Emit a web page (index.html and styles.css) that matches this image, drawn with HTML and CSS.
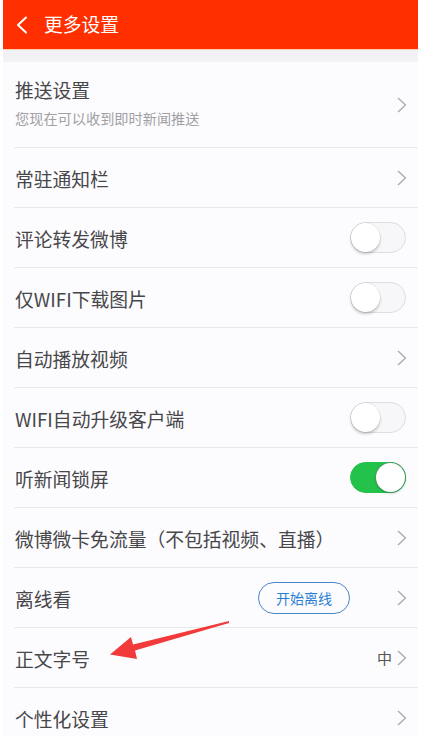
FILE: index.html
```html
<!DOCTYPE html>
<html lang="zh-CN">
<head>
<meta charset="utf-8">
<title>更多设置</title>
<link rel="stylesheet" href="styles.css">
</head>
<body>
<div class="screen">
  <header class="topbar">
    <svg class="back" width="14" height="18" viewBox="0 0 14 18"><path d="M11 1.5 L3 9 L11 16.5" fill="none" stroke="#fff" stroke-width="2" stroke-linecap="round" stroke-linejoin="round"/></svg>
    <span class="title">更多设置</span>
  </header>
  <div class="gap"></div>
  <ul class="list">
    <li class="row tall">
      <div class="label">
        <div class="main">推送设置</div>
        <div class="sub">您现在可以收到即时新闻推送</div>
      </div>
      <svg class="chev" width="10" height="16" viewBox="0 0 10 16"><path d="M1 1 L8.5 8 L1 15" fill="none" stroke="#a9a9ad" stroke-width="1.3"/></svg>
    </li>
    <li class="row">
      <div class="label"><div class="main">常驻通知栏</div></div>
      <svg class="chev" width="10" height="16" viewBox="0 0 10 16"><path d="M1 1 L8.5 8 L1 15" fill="none" stroke="#a9a9ad" stroke-width="1.3"/></svg>
    </li>
    <li class="row">
      <div class="label"><div class="main">评论转发微博</div></div>
      <span class="toggle"><span class="knob"></span></span>
    </li>
    <li class="row">
      <div class="label"><div class="main">仅WIFI下载图片</div></div>
      <span class="toggle"><span class="knob"></span></span>
    </li>
    <li class="row">
      <div class="label"><div class="main">自动播放视频</div></div>
      <svg class="chev" width="10" height="16" viewBox="0 0 10 16"><path d="M1 1 L8.5 8 L1 15" fill="none" stroke="#a9a9ad" stroke-width="1.3"/></svg>
    </li>
    <li class="row">
      <div class="label"><div class="main">WIFI自动升级客户端</div></div>
      <span class="toggle"><span class="knob"></span></span>
    </li>
    <li class="row">
      <div class="label"><div class="main">听新闻锁屏</div></div>
      <span class="toggle on"><span class="knob"></span></span>
    </li>
    <li class="row">
      <div class="label"><div class="main">微博微卡免流量（不包括视频、直播）</div></div>
      <svg class="chev" width="10" height="16" viewBox="0 0 10 16"><path d="M1 1 L8.5 8 L1 15" fill="none" stroke="#a9a9ad" stroke-width="1.3"/></svg>
    </li>
    <li class="row">
      <div class="label"><div class="main">离线看</div></div>
      <span class="btn">开始离线</span>
      <svg class="chev far" width="10" height="16" viewBox="0 0 10 16"><path d="M1 1 L8.5 8 L1 15" fill="none" stroke="#a9a9ad" stroke-width="1.3"/></svg>
    </li>
    <li class="row">
      <div class="label"><div class="main">正文字号</div></div>
      <span class="value">中</span>
      <svg class="chev near" width="10" height="16" viewBox="0 0 10 16"><path d="M1 1 L8.5 8 L1 15" fill="none" stroke="#a9a9ad" stroke-width="1.3"/></svg>
    </li>
    <li class="row">
      <div class="label"><div class="main">个性化设置</div></div>
      <svg class="chev" width="10" height="16" viewBox="0 0 10 16"><path d="M1 1 L8.5 8 L1 15" fill="none" stroke="#a9a9ad" stroke-width="1.3"/></svg>
    </li>
  </ul>
  <svg class="arrow" width="428" height="736" viewBox="0 0 428 736">
    <polygon points="229,621 133,644.5 131,637 110,654.5 137,659 135,650.5 229,623" fill="#f23a3a"/>
  </svg>
</div>
</body>
</html>
```

FILE: styles.css
```css
html, body {
  margin: 0;
  padding: 0;
  background: #ffffff;
}
body {
  font-family: "Noto Sans CJK SC", "Noto Sans", sans-serif;
  height: 736px;
  overflow: hidden;
}
.screen {
  margin-left: 3px;
  width: 415px;
  background: #fcfbfe;
  min-height: 736px;
}
.topbar {
  height: 49px;
  background: #ff2f00;
  border-bottom: 1px solid #ffcfae;
  display: flex;
  align-items: center;
  color: #fff;
}
.back {
  margin-left: 12px;
}
.title {
  margin-left: 15px;
  font-size: 18.8px;
  line-height: 1;
}
.gap {
  height: 12px;
  background: #f2f1f5;
}
.list {
  list-style: none;
  margin: 0;
  padding: 0;
}
.row {
  box-sizing: border-box;
  height: 60px;
  margin-left: 11px;
  padding-left: 1px;
  padding-right: 11px;
  border-bottom: 1px solid #e9e8ec;
  display: flex;
  align-items: center;
}
.row.tall {
  height: 86px;
}
.label {
  flex: 1;
  min-width: 0;
}
.main {
  font-size: 18.8px;
  color: #47474a;
  line-height: 24px;
  white-space: nowrap;
  padding-top: 3px;
}
.tall .main {
  padding-top: 0;
  margin-top: -4px;
}
.sub {
  font-size: 14.2px;
  color: #a0a0a4;
  line-height: 18px;
  margin-top: 7px;
  white-space: nowrap;
}
.chev {
  display: block;
  flex: none;
}
.chev.far {
  margin-left: 47px;
}
.chev.near {
  margin-left: 5px;
}
.value {
  font-size: 15px;
  color: #555;
}
.toggle {
  box-sizing: border-box;
  width: 56px;
  height: 31px;
  border-radius: 16px;
  border: 1px solid #dedde2;
  background: #f7f7f9;
  position: relative;
  display: block;
  flex: none;
  margin-right: 1px;
}
.knob {
  position: absolute;
  left: 0;
  top: 0;
  width: 29px;
  height: 29px;
  border-radius: 50%;
  background: #fff;
  box-shadow: 0 2px 3px rgba(0, 0, 0, 0.22), 0 0 0 0.5px rgba(0, 0, 0, 0.08);
}
.toggle.on {
  background: #22c24b;
  border-color: #22c24b;
}
.toggle.on .knob {
  left: auto;
  right: 0;
  box-shadow: 0 1px 3px rgba(0, 80, 20, 0.3), 0 0 0 1px #4aa465;
}
.btn {
  box-sizing: border-box;
  width: 92px;
  height: 32px;
  border-radius: 16px;
  border: 1px solid #4a87c6;
  color: #2d7fd5;
  font-size: 14px;
  display: flex;
  align-items: center;
  justify-content: center;
  flex: none;
}
.arrow {
  position: absolute;
  left: 0;
  top: 0;
  pointer-events: none;
}
```
